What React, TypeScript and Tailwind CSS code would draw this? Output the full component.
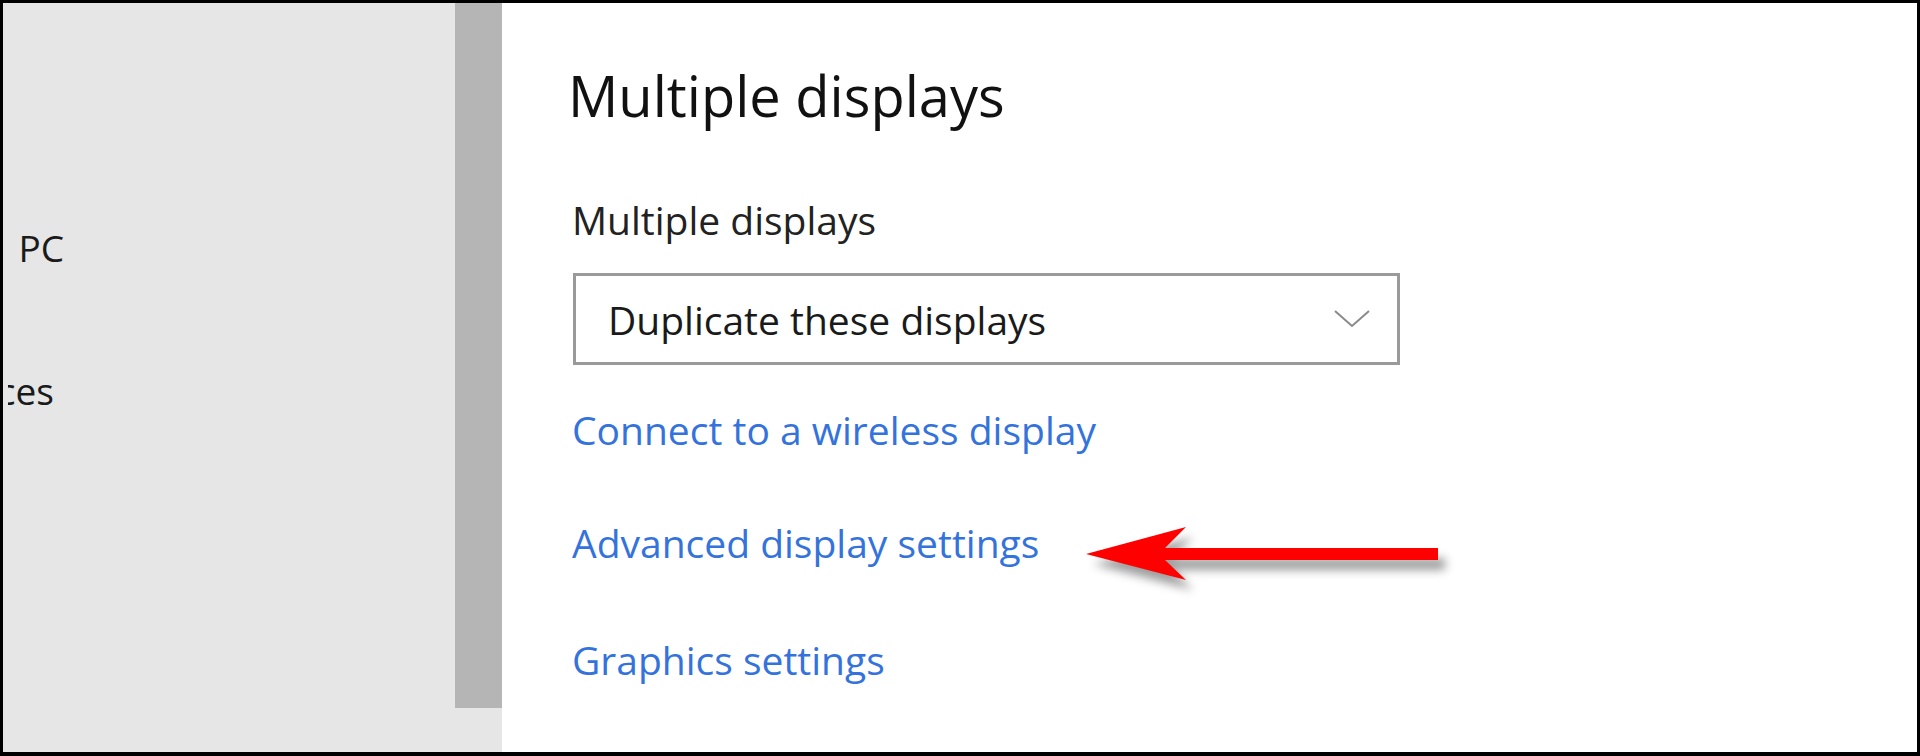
import React from 'react';

const FONT = { fontFamily: '"Open Sans", "Noto Sans", sans-serif' };

function Sidebar() {
	return (
		<div className="flex h-full w-[499px] shrink-0 bg-[#e6e6e6]">
			{/* nav items, clipped at the left edge */}
			<div className="flex-1 pl-[5px] pt-[226px]">
				<div className="flex w-[56px] flex-col items-end overflow-hidden whitespace-nowrap text-[37px] leading-none text-[#1a1a1a]">
					<span>Projecting to this PC</span>
					<span className="mr-[10px] mt-[106px]">Shared experiences</span>
				</div>
			</div>
			{/* scrollbar */}
			<div className="h-[705px] w-[47px] bg-[#b5b5b5]" />
		</div>
	);
}

function Dropdown() {
	return (
		<div className="ml-[1px] flex h-[92px] w-[827px] items-center justify-between border-[3px] border-[#9a9a9a] pl-[32px] pr-[27px]">
			<span className="text-[39px] leading-none text-[#1a1a1a]">Duplicate these displays</span>
			<svg width="36" height="18" viewBox="0 0 36 18" fill="none">
				<polyline points="1,1 18,16 35,1" stroke="#8a8a8a" strokeWidth="2" />
			</svg>
		</div>
	);
}

function Arrow() {
	return (
		<svg className="absolute left-[1070px] top-[510px]" width="390" height="90" viewBox="1070 510 390 90"
			style={{ filter: 'drop-shadow(7px 10px 5px rgba(0,0,0,0.38))' }}>
			<polygon fill="#ff0000"
				points="1083,551 1183,524 1162,545 1435,545 1435,557 1162,557 1183,577" />
		</svg>
	);
}

export default function App() {
	return (
		<div className="relative flex h-[756px] w-[1920px] overflow-hidden border-t-[3px] border-r-[3px] border-b-4 border-l-[3px] border-black bg-white" style={FONT}>
			<Sidebar />
			<div className="flex flex-1 flex-col items-start pl-[70px] pt-[64px]">
				<h1 className="-ml-[4px] text-[56px] font-normal leading-none text-[#111]">Multiple displays</h1>
				<div className="mt-[77px] text-[39px] leading-none text-[#222]">Multiple displays</div>
				<div className="mt-[34px]">
					<Dropdown />
				</div>
				<a className="mt-[45px] text-[39px] leading-none text-[#3473db]">Connect to a wireless display</a>
				<a className="mt-[74px] text-[39px] leading-none text-[#3473db]">Advanced display settings</a>
				<a className="mt-[78px] text-[39px] leading-none text-[#3473db]">Graphics settings</a>
			</div>
			<Arrow />
		</div>
	);
}
